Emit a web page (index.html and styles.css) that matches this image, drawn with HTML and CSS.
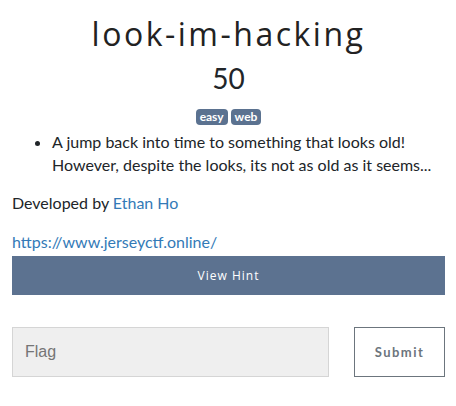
FILE: index.html
```html
<!DOCTYPE html>
<html>
<head>
<meta charset="utf-8">
<link rel="stylesheet" href="styles.css">
</head>
<body>
<div class="modal">
  <h1 class="title">look-im-hacking</h1>
  <h2 class="value">50</h2>
  <div class="tags">
    <span class="tag">easy</span>
    <span class="tag">web</span>
  </div>
  <ul class="desc">
    <li>A jump back into time to something that looks old! However, despite the looks, its not as old as it seems...</li>
  </ul>
  <p class="dev">Developed by <a href="#">Ethan Ho</a></p>
  <p class="url"><a href="#">https://www.jerseyctf.online/</a></p>
  <button class="hint">View Hint</button>
  <div class="submit-row">
    <input class="flag" type="text" placeholder="Flag">
    <button class="submit">Submit</button>
  </div>
</div>
</body>
</html>
```
FILE: styles.css
```css
body {
  margin: 0;
  font-family: Lato, "Open Sans", sans-serif;
  color: #212529;
  background: #fff;
}
.modal {
  padding: 12px 11px 0 12px;
}
.title {
  margin: 0;
  text-align: center;
  font-family: "Open Sans", Lato, sans-serif;
  font-weight: 400;
  font-size: 32px;
  line-height: 44px;
  letter-spacing: 2.5px;
  color: #222;
}
.value {
  margin: 5px 0 0 0;
  text-align: center;
  font-weight: 400;
  font-size: 28px;
  line-height: 34px;
}
.tags {
  display: flex;
  justify-content: center;
  gap: 3px;
  margin-top: 14px;
}
.tag {
  background: #5b7290;
  color: #fff;
  font-weight: 700;
  font-size: 12px;
  line-height: 16px;
  padding: 0 4px;
  border-radius: 4px;
}
.desc {
  margin: 5px 0 15px 0;
  padding-left: 40px;
  font-size: 16px;
  line-height: 23px;
}
.dev, .url {
  margin: 0 0 15px 0;
  font-size: 16px;
  line-height: 24px;
}
.url { margin-bottom: 0; }
a {
  color: #337ab7;
  text-decoration: none;
}
.hint {
  display: block;
  width: 100%;
  height: 39px;
  margin-top: 2px;
  border: none;
  background: #5c7290;
  color: #fff;
  font-family: "Open Sans", Lato, sans-serif;
  font-size: 12px;
  letter-spacing: 1px;
}
.submit-row {
  display: flex;
  gap: 25px;
  margin-top: 32px;
}
.flag {
  width: 317px;
  height: 50px;
  box-sizing: border-box;
  background: #efefef;
  border: 1px solid #d5d5d5;
  padding: 0 12px;
  font-family: "Liberation Sans", Arial, sans-serif;
  font-size: 16px;
  margin: 0;
}
.flag::placeholder { color: #757575; }
.submit {
  width: 91px;
  height: 50px;
  background: #fff;
  border: 1px solid #6c757d;
  color: #6c757d;
  font-family: Lato, sans-serif;
  font-weight: 700;
  font-size: 13px;
  letter-spacing: 1.5px;
  margin: 0;
}
```
